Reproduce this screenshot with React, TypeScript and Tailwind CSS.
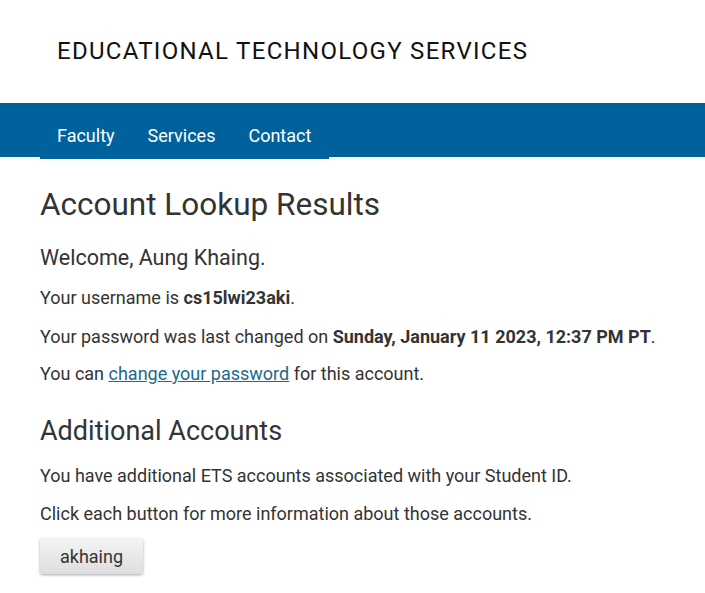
export default function App() {
  return (
    <div className="min-h-[593px] bg-white text-[#333]" style={{ fontFamily: "Roboto, 'Open Sans', sans-serif" }}>
      <header className="h-[103px] flex items-center pl-[57px] pb-[1px]">
        <div className="text-[24px] tracking-[1.3px] text-[#111] leading-none">EDUCATIONAL TECHNOLOGY SERVICES</div>
      </header>
      <nav className="h-[54px] bg-[#00629c]">
        <ul className="ml-[40px] w-[289px] h-[56px] bg-[#00629c] flex items-center pl-[17px] pt-[8px] gap-[33px] text-[18px] text-white">
          <li>Faculty</li>
          <li>Services</li>
          <li>Contact</li>
        </ul>
      </nav>
      <main className="px-[40px] pt-[29px]">
        <h1 className="text-[31.5px] leading-[38px] font-normal">Account Lookup Results</h1>
        <p className="mt-[21px] text-[21.5px] leading-[26px]">Welcome, Aung Khaing.</p>
        <p className="mt-[15px] text-[18px] leading-[24px]">Your username is <b className="font-bold">cs15lwi23aki</b>.</p>
        <p className="mt-[15px] text-[18px] leading-[24px]">Your password was last changed on <b className="font-bold">Sunday, January 11 2023, 12:37 PM PT</b>.</p>
        <p className="mt-[13px] text-[18px] leading-[24px]">You can <a className="text-[#1a6a8e] underline" href="#">change your password</a> for this account.</p>
        <h2 className="mt-[29px] text-[27px] leading-[32px] font-normal">Additional Accounts</h2>
        <p className="mt-[17px] text-[18px] leading-[24px]">You have additional ETS accounts associated with your Student ID.</p>
        <p className="mt-[14px] text-[18px] leading-[24px]">Click each button for more information about those accounts.</p>
        <button className="mt-[12px] w-[103px] h-[36px] rounded-[3px] bg-gradient-to-b from-[#f4f4f4] to-[#dedede] text-[18px] text-[#333] shadow-[0_1px_3px_rgba(0,0,0,0.35)]">akhaing</button>
      </main>
    </div>
  );
}
